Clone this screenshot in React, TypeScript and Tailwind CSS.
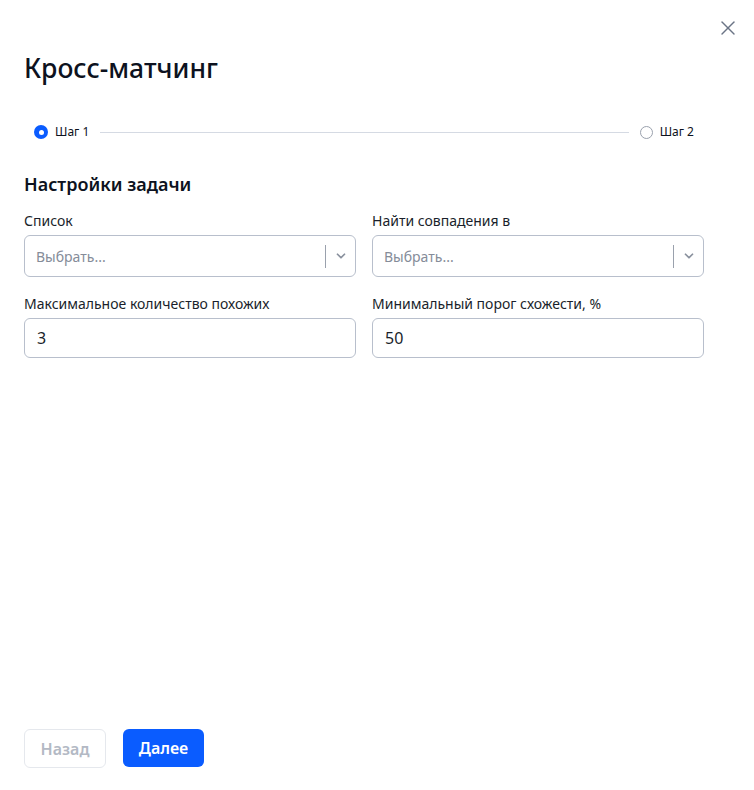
import { ChevronDown, X } from "lucide-react";

const font = { fontFamily: '"Noto Sans", "Open Sans", sans-serif' };

function Select({ label }: { label: string }) {
  return (
    <div className="flex flex-col gap-[4px]">
      <span className="text-[14px] leading-[20px] text-[#1a1f2b]">{label}</span>
      <div className="flex h-[42px] items-center rounded-[6px] border border-[#b8bfcc] bg-white">
        <span className="flex-1 px-[11px] text-[14px] text-[#858c99]">Выбрать...</span>
        <div className="h-[23px] w-px bg-[#9aa1ad]" />
        <div className="flex w-[29px] items-center justify-center">
          <ChevronDown className="h-[14px] w-[14px] text-[#8a919e]" strokeWidth={3} />
        </div>
      </div>
    </div>
  );
}

function Field({ label, value }: { label: string; value: string }) {
  return (
    <div className="flex flex-col gap-[4px]">
      <span className="text-[14px] leading-[20px] text-[#1a1f2b]">{label}</span>
      <div className="flex h-[40px] items-center rounded-[6px] border border-[#b8bfcc] bg-white px-[12px]">
        <span className="text-[16px] text-[#1a1f2b]">{value}</span>
      </div>
    </div>
  );
}

export default function App() {
  return (
    <div className="relative flex h-[790px] w-[754px] flex-col bg-white px-[24px] pb-[22px] pt-[50px] pr-[50px]" style={font}>
      <button className="absolute right-[14px] top-[16px] text-[#6b7485]">
        <X className="h-[24px] w-[24px]" strokeWidth={1.4} />
      </button>

      <h1 className="text-[26.5px] font-medium leading-[36px] text-[#0d1220]">Кросс-матчинг</h1>

      {/* stepper */}
      <div className="mt-[37px] flex items-center pl-[10px] pr-[10px]">
        <div className="flex items-center gap-[7px]">
          <span className="flex h-[14px] w-[14px] items-center justify-center rounded-full bg-[#0a5cff]">
            <span className="h-[5px] w-[5px] rounded-full bg-white" />
          </span>
          <span className="text-[12px] text-[#0d1220]">Шаг 1</span>
        </div>
        <div className="mx-[11px] h-px flex-1 bg-[#d5dae3]" />
        <div className="flex items-center gap-[7px]">
          <span className="h-[13px] w-[13px] rounded-full border border-[#9aa1ad]" />
          <span className="text-[12px] text-[#0d1220]">Шаг 2</span>
        </div>
      </div>

      <h2 className="mt-[30px] text-[18px] font-semibold leading-[26px] text-[#0d1220]">Настройки задачи</h2>

      <div className="mt-[14px] grid grid-cols-2 gap-x-[16px] gap-y-[17px]">
        <Select label="Список" />
        <Select label="Найти совпадения в" />
        <Field label="Максимальное количество похожих" value="3" />
        <Field label="Минимальный порог схожести, %" value="50" />
      </div>

      <div className="mt-auto flex gap-[17px]">
        <button className="h-[39px] w-[82px] rounded-[6px] border border-[#e5e8ed] text-[16px] font-semibold text-[#b3b9c4]">Назад</button>
        <button className="h-[38px] w-[81px] rounded-[6px] bg-[#0a5cff] text-[16px] font-semibold text-white">Далее</button>
      </div>
    </div>
  );
}
